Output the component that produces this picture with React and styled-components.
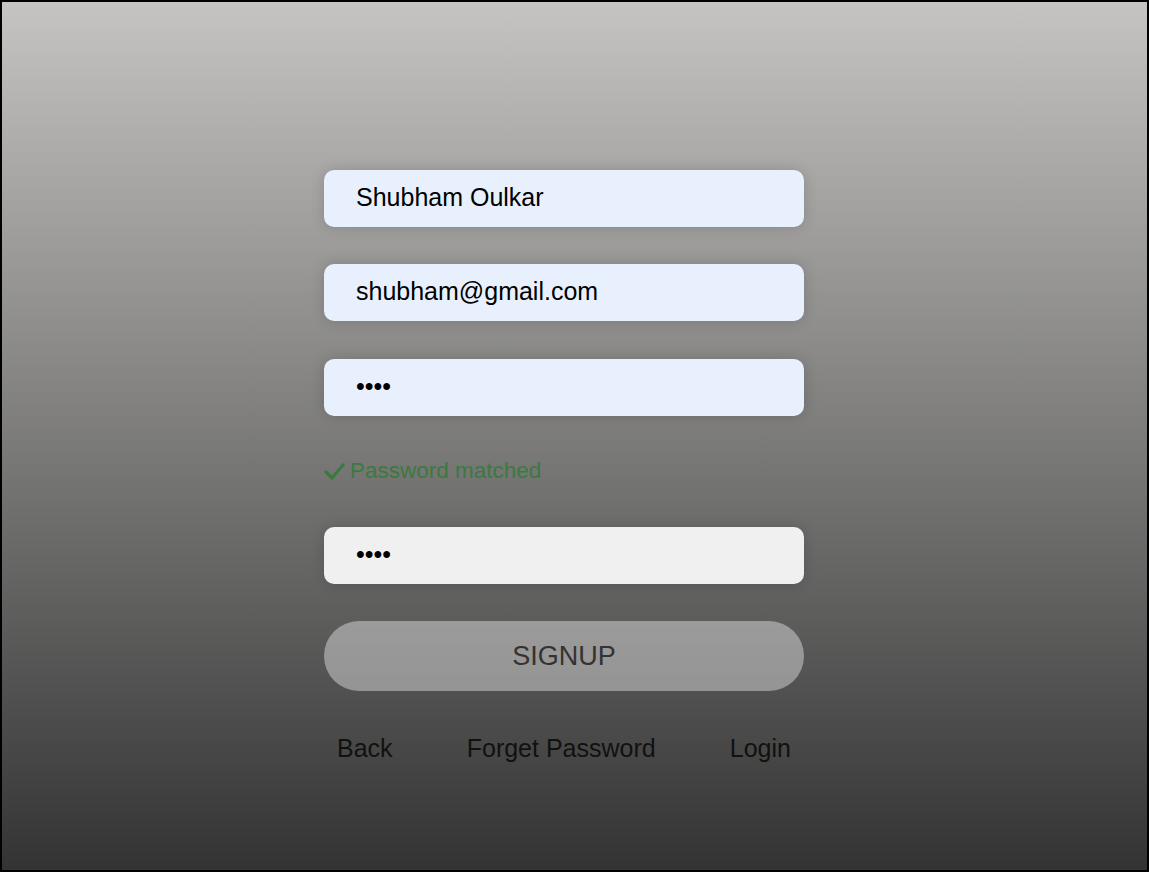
import React from "react";
import styled, { createGlobalStyle } from "styled-components";

const GlobalStyle = createGlobalStyle`
  * { box-sizing: border-box; }
  body {
    margin: 0;
    font-family: "Liberation Sans", Arial, sans-serif;
  }
`;

const Page = styled.div`
  min-height: 100vh;
  border: 2px solid #000;
  background: linear-gradient(to bottom, #c5c4c2, #333333);
  padding: 168px 21px 0 0;
`;

const Form = styled.form`
  width: 480px;
  margin: 0 auto;
  display: flex;
  flex-direction: column;
`;

const Input = styled.input`
  height: 57px;
  width: 100%;
  border: none;
  outline: none;
  border-radius: 10px;
  padding: 0 32px 3px;
  font-family: "Liberation Sans", Arial, sans-serif;
  font-size: 25px;
  color: #000;
  background: ${(p) => (p.$filled ? "#e8f0fe" : "#f0f0f0")};
  box-shadow: 0 0 14px rgba(0, 0, 0, 0.16);
  margin-bottom: ${(p) => p.$mb || 37}px;
`;

const Match = styled.div`
  display: flex;
  align-items: center;
  gap: 5px;
  color: #3b7a3f;
  font-size: 22.5px;
  margin-bottom: 43px;
  svg {
    flex-shrink: 0;
    margin-top: 1px;
  }
`;

const Button = styled.button`
  height: 70px;
  border: none;
  border-radius: 35px;
  background: rgba(255, 255, 255, 0.39);
  color: #333;
  font-family: "Liberation Sans", Arial, sans-serif;
  font-size: 27px;
  cursor: pointer;
  margin-bottom: 43px;
`;

const Links = styled.div`
  display: flex;
  justify-content: space-between;
`;

const LinkButton = styled.a`
  padding: 0 13px;
  font-size: 25px;
  color: #111;
  text-decoration: none;
  cursor: pointer;
`;

const CheckIcon = () => (
  <svg width="21" height="17" viewBox="0 0 21 17">
    <polyline
      points="2,9 8,15 19,2"
      fill="none"
      stroke="#3b7a3f"
      strokeWidth="3.2"
      strokeLinecap="round"
      strokeLinejoin="round"
    />
  </svg>
);

const App = () => {
  return (
    <Page>
      <GlobalStyle />
      <Form onSubmit={(e) => e.preventDefault()}>
        <Input $filled type="text" defaultValue="Shubham Oulkar" />
        <Input $filled type="email" defaultValue="shubham@gmail.com" $mb={38} />
        <Input $filled type="password" defaultValue="1234" $mb={42} />
        <Match>
          <CheckIcon />
          Password matched
        </Match>
        <Input type="password" defaultValue="1234" />
        <Button type="submit">SIGNUP</Button>
        <Links>
          <LinkButton>Back</LinkButton>
          <LinkButton>Forget Password</LinkButton>
          <LinkButton>Login</LinkButton>
        </Links>
      </Form>
    </Page>
  );
};

export default App;
